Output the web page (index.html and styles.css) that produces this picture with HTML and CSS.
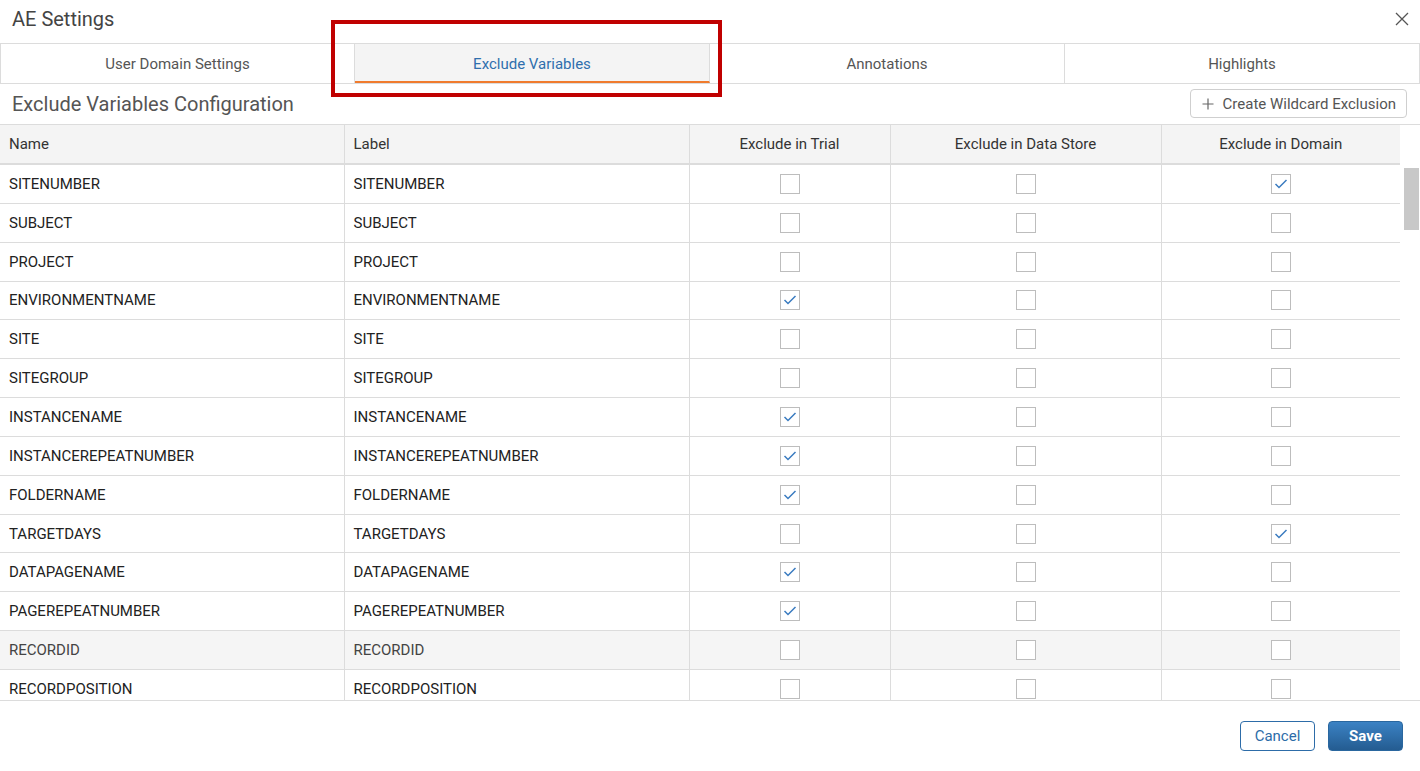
FILE: index.html
```html
<!DOCTYPE html>
<html lang="en">
<head>
  <meta charset="UTF-8" />
  <title>AE Settings</title>
  <link rel="stylesheet" href="styles.css">
</head>
<body>
  <div class="dialog">
    <div class="dialog-header">
      <span class="dialog-title">AE Settings</span>
      <button class="close-btn" aria-label="Close">
        <svg width="14" height="14" viewBox="0 0 14 14"><path d="M1 1 L13 13 M13 1 L1 13" stroke="#555" stroke-width="1.3" fill="none"/></svg>
      </button>
    </div>

    <div class="tabs">
      <div class="tab">User Domain Settings</div>
      <div class="tab active">Exclude Variables</div>
      <div class="tab">Annotations</div>
      <div class="tab">Highlights</div>
    </div>

    <div class="section-bar">
      <h2>Exclude Variables Configuration</h2>
      <button class="wildcard-btn">
        <svg width="12" height="12" viewBox="0 0 12 12"><path d="M6 0.5 V11.5 M0.5 6 H11.5" stroke="#666" stroke-width="1.2" fill="none"/></svg>
        Create Wildcard Exclusion
      </button>
    </div>

    <div id="tableContainer">
      <table class="vars">
        <colgroup>
          <col class="c-name"><col class="c-label"><col class="c-trial"><col class="c-store"><col class="c-domain">
        </colgroup>
        <thead>
          <tr>
            <th>Name</th>
            <th>Label</th>
            <th class="center">Exclude in Trial</th>
            <th class="center">Exclude in Data Store</th>
            <th class="center">Exclude in Domain</th>
          </tr>
        </thead>
        <tbody>
          <tr><td>SITENUMBER</td><td>SITENUMBER</td><td class="center"><span class="cb"></span></td><td class="center"><span class="cb"></span></td><td class="center"><span class="cb on"><svg viewBox="0 0 18 18"><path d="M3.5 9 L7 12.5 L14.5 5" /></svg></span></td></tr>
          <tr><td>SUBJECT</td><td>SUBJECT</td><td class="center"><span class="cb"></span></td><td class="center"><span class="cb"></span></td><td class="center"><span class="cb"></span></td></tr>
          <tr><td>PROJECT</td><td>PROJECT</td><td class="center"><span class="cb"></span></td><td class="center"><span class="cb"></span></td><td class="center"><span class="cb"></span></td></tr>
          <tr><td>ENVIRONMENTNAME</td><td>ENVIRONMENTNAME</td><td class="center"><span class="cb on"><svg viewBox="0 0 18 18"><path d="M3.5 9 L7 12.5 L14.5 5" /></svg></span></td><td class="center"><span class="cb"></span></td><td class="center"><span class="cb"></span></td></tr>
          <tr><td>SITE</td><td>SITE</td><td class="center"><span class="cb"></span></td><td class="center"><span class="cb"></span></td><td class="center"><span class="cb"></span></td></tr>
          <tr><td>SITEGROUP</td><td>SITEGROUP</td><td class="center"><span class="cb"></span></td><td class="center"><span class="cb"></span></td><td class="center"><span class="cb"></span></td></tr>
          <tr><td>INSTANCENAME</td><td>INSTANCENAME</td><td class="center"><span class="cb on"><svg viewBox="0 0 18 18"><path d="M3.5 9 L7 12.5 L14.5 5" /></svg></span></td><td class="center"><span class="cb"></span></td><td class="center"><span class="cb"></span></td></tr>
          <tr><td>INSTANCEREPEATNUMBER</td><td>INSTANCEREPEATNUMBER</td><td class="center"><span class="cb on"><svg viewBox="0 0 18 18"><path d="M3.5 9 L7 12.5 L14.5 5" /></svg></span></td><td class="center"><span class="cb"></span></td><td class="center"><span class="cb"></span></td></tr>
          <tr><td>FOLDERNAME</td><td>FOLDERNAME</td><td class="center"><span class="cb on"><svg viewBox="0 0 18 18"><path d="M3.5 9 L7 12.5 L14.5 5" /></svg></span></td><td class="center"><span class="cb"></span></td><td class="center"><span class="cb"></span></td></tr>
          <tr><td>TARGETDAYS</td><td>TARGETDAYS</td><td class="center"><span class="cb"></span></td><td class="center"><span class="cb"></span></td><td class="center"><span class="cb on"><svg viewBox="0 0 18 18"><path d="M3.5 9 L7 12.5 L14.5 5" /></svg></span></td></tr>
          <tr><td>DATAPAGENAME</td><td>DATAPAGENAME</td><td class="center"><span class="cb on"><svg viewBox="0 0 18 18"><path d="M3.5 9 L7 12.5 L14.5 5" /></svg></span></td><td class="center"><span class="cb"></span></td><td class="center"><span class="cb"></span></td></tr>
          <tr><td>PAGEREPEATNUMBER</td><td>PAGEREPEATNUMBER</td><td class="center"><span class="cb on"><svg viewBox="0 0 18 18"><path d="M3.5 9 L7 12.5 L14.5 5" /></svg></span></td><td class="center"><span class="cb"></span></td><td class="center"><span class="cb"></span></td></tr>
          <tr class="hover"><td>RECORDID</td><td>RECORDID</td><td class="center"><span class="cb"></span></td><td class="center"><span class="cb"></span></td><td class="center"><span class="cb"></span></td></tr>
          <tr><td>RECORDPOSITION</td><td>RECORDPOSITION</td><td class="center"><span class="cb"></span></td><td class="center"><span class="cb"></span></td><td class="center"><span class="cb"></span></td></tr>
        </tbody>
      </table>
      <div class="scroll-track"><div class="scroll-thumb"></div></div>
    </div>

    <div class="dialog-footer">
      <button class="btn-cancel">Cancel</button>
      <button class="btn-save">Save</button>
    </div>

    <!-- callout drawn over the active tab -->
    <div class="callout"></div>
  </div>
</body>
</html>
```

FILE: styles.css
```css
body {
  margin: 0;
  font-family: Roboto, "Liberation Sans", Arial, sans-serif;
  background: #fff;
  color: #333;
}
.dialog {
  position: relative;
  width: 1420px;
  height: 771px;
  background: #fff;
  overflow: hidden;
}
.dialog-header {
  height: 43px;
  display: flex;
  align-items: center;
  justify-content: space-between;
  padding: 0 10px 5px 12px;
  box-sizing: border-box;
}
.dialog-title {
  font-size: 20px;
  color: #444;
}
.close-btn {
  border: none;
  background: none;
  padding: 0;
  width: 16px;
  height: 16px;
  display: flex;
  align-items: center;
  justify-content: center;
  cursor: pointer;
}

/* tabs */
.tabs {
  display: grid;
  grid-template-columns: repeat(4, 1fr);
  height: 41px;
  border-top: 1px solid #dcdcdc;
  border-bottom: 1px solid #dcdcdc;
  box-sizing: border-box;
}
.tab {
  display: flex;
  align-items: center;
  justify-content: center;
  font-size: 15px;
  color: #555;
  border-right: 1px solid #dcdcdc;
  cursor: pointer;
}
.tab:first-child {
  border-left: 1px solid #dcdcdc;
}
.tab.active {
  background: #f4f4f4;
  color: #2f6fad;
  border-bottom: 2px solid #f07b2d;
  padding-top: 2px;
}

.section-bar {
  height: 40px;
  display: flex;
  align-items: center;
  justify-content: space-between;
  padding: 0 13px 0 12px;
}
.section-bar h2 {
  margin: 0;
  font-size: 20px;
  font-weight: normal;
  color: #555;
}
.wildcard-btn {
  display: flex;
  align-items: center;
  gap: 9px;
  height: 29px;
  padding: 0 10px 0 11px;
  margin-top: -1px;
  font-family: inherit;
  font-size: 15px;
  color: #555;
  background: #fff;
  border: 1px solid #cfcfcf;
  border-radius: 4px;
  cursor: pointer;
}

/* table */
#tableContainer {
  display: flex;
  height: 577px;
  border-top: 1px solid #dcdcdc;
  border-bottom: 1px solid #dcdcdc;
  box-sizing: border-box;
  overflow: hidden;
}
table.vars {
  width: 1400px;
  border-collapse: collapse;
  table-layout: fixed;
  flex: none;
}
col.c-name { width: 344px; }
col.c-label { width: 345px; }
col.c-trial { width: 201px; }
col.c-store { width: 271px; }
col.c-domain { width: 239px; }
th, td {
  font-size: 15px;
  text-align: left;
  white-space: nowrap;
  padding: 0 9px;
  border-left: 1px solid #dcdcdc;
  border-bottom: 1px solid #dcdcdc;
}
th:first-child, td:first-child {
  border-left: none;
}
th {
  height: 38px;
  background: #f4f4f4;
  font-weight: normal;
  color: #333;
  border-bottom: 2px solid #dcdcdc;
}
td {
  height: 37.85px;
  color: #222;
}
.center {
  text-align: center;
}
tr.hover td {
  background: #f5f5f5;
  color: #444;
}
.cb {
  display: inline-block;
  width: 18px;
  height: 18px;
  border: 1px solid #bdbdbd;
  vertical-align: middle;
  background: #fff;
}
.cb svg {
  display: block;
  width: 18px;
  height: 18px;
  fill: none;
  stroke: #3a7bc0;
  stroke-width: 1.5;
}
.scroll-track {
  flex: 1;
  padding-top: 43px;
  padding-left: 4px;
}
.scroll-thumb {
  width: 15px;
  height: 62px;
  background: #c8c8c8;
}

/* footer */
.dialog-footer {
  display: flex;
  justify-content: flex-end;
  gap: 13px;
  padding: 20px 17px 0 0;
}
.dialog-footer button {
  width: 75px;
  height: 30px;
  font-family: inherit;
  font-size: 15px;
  border-radius: 4px;
  cursor: pointer;
}
.btn-cancel {
  background: #fff;
  color: #2d6ca8;
  border: 1px solid #2d6ca8;
}
.btn-save {
  background: linear-gradient(#3b82c4, #245c91);
  color: #fff;
  font-weight: bold;
  border: 1px solid #2a679f;
}

.callout {
  position: absolute;
  left: 331px;
  top: 20px;
  width: 391px;
  height: 77px;
  border: 4px solid #c00000;
  box-sizing: border-box;
  pointer-events: none;
}
```
